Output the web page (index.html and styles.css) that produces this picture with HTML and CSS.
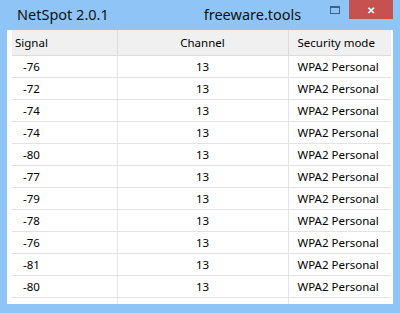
FILE: index.html
```html
<!DOCTYPE html>
<html lang="en">
<head>
  <meta charset="UTF-8" />
  <title>NetSpot 2.0.1</title>
  <link rel="stylesheet" href="styles.css">
</head>
<body>

  <div class="window">

    <div class="titlebar">
      <span class="app-name">NetSpot 2.0.1</span>
      <span class="site-name">freeware.tools</span>
      <div class="controls">
        <span class="btn-max"><span class="max-box"></span></span>
        <span class="btn-close">&#x2715;</span>
      </div>
    </div>

    <div class="client">
      <table class="grid">
        <thead>
          <tr>
            <th class="col-signal">Signal</th>
            <th class="col-channel">Channel</th>
            <th class="col-security">Security mode</th>
          </tr>
        </thead>
        <tbody>
          <tr><td class="col-signal">-76</td><td class="col-channel">13</td><td class="col-security">WPA2 Personal</td></tr>
          <tr><td class="col-signal">-72</td><td class="col-channel">13</td><td class="col-security">WPA2 Personal</td></tr>
          <tr><td class="col-signal">-74</td><td class="col-channel">13</td><td class="col-security">WPA2 Personal</td></tr>
          <tr><td class="col-signal">-74</td><td class="col-channel">13</td><td class="col-security">WPA2 Personal</td></tr>
          <tr><td class="col-signal">-80</td><td class="col-channel">13</td><td class="col-security">WPA2 Personal</td></tr>
          <tr><td class="col-signal">-77</td><td class="col-channel">13</td><td class="col-security">WPA2 Personal</td></tr>
          <tr><td class="col-signal">-79</td><td class="col-channel">13</td><td class="col-security">WPA2 Personal</td></tr>
          <tr><td class="col-signal">-78</td><td class="col-channel">13</td><td class="col-security">WPA2 Personal</td></tr>
          <tr><td class="col-signal">-76</td><td class="col-channel">13</td><td class="col-security">WPA2 Personal</td></tr>
          <tr><td class="col-signal">-81</td><td class="col-channel">13</td><td class="col-security">WPA2 Personal</td></tr>
          <tr><td class="col-signal">-80</td><td class="col-channel">13</td><td class="col-security">WPA2 Personal</td></tr>
          <tr><td class="col-signal"></td><td class="col-channel"></td><td class="col-security"></td></tr>
        </tbody>
      </table>
    </div>

  </div>

</body>
</html>
```

FILE: styles.css
```css
* {
  box-sizing: border-box;
}

body {
  margin: 0;
  font-family: "Noto Sans", "Open Sans", sans-serif;
  background: #8ec5f6;
  color: #000;
}

.window {
  width: 400px;
  height: 313px;
  display: flex;
  flex-direction: column;
  background: #8ec5f6;
}

.titlebar {
  height: 30px;
  display: flex;
  align-items: flex-start;
}

.app-name {
  font-size: 14.5px;
  margin: 4px 0 0 17px;
  color: #111;
}

.site-name {
  font-size: 14.5px;
  margin: 4px 0 0 95px;
  color: #111;
}

.controls {
  margin-left: auto;
  margin-right: 7px;
  display: flex;
}

.btn-max {
  width: 26px;
  height: 19px;
  display: flex;
  align-items: center;
  justify-content: center;
  margin-right: 3px;
  padding-left: 3px;
}

.max-box {
  width: 10px;
  height: 8px;
  border: 1px solid #3f6184;
  border-top-width: 2px;
}

.btn-close {
  width: 44px;
  height: 19px;
  background: #c75050;
  color: #fff;
  font-size: 10px;
  font-weight: bold;
  display: flex;
  align-items: center;
  justify-content: center;
}

.client {
  height: 274px;
  margin: 0 7px;
  padding: 0 2px 0 5px;
  background: #fff;
  overflow: hidden;
}

.grid {
  width: 379px;
  border-collapse: collapse;
  table-layout: fixed;
  font-size: 11.5px;
}

.grid th {
  height: 25px;
  padding: 0;
  font-weight: normal;
  background: #f0f0f0;
  border-right: 1px solid #dadada;
  border-bottom: 1px solid #dcdcdc;
}

.grid td {
  height: 22px;
  padding: 0;
  border-right: 1px solid #e3e3e3;
  border-bottom: 1px solid #e3e3e3;
}

.grid tr > :last-child {
  border-right: none;
}

.col-signal {
  width: 105px;
  text-align: left;
}

th.col-signal {
  padding-left: 3px;
}

td.col-signal {
  padding-left: 11px;
}

.col-channel {
  width: 171px;
  text-align: center;
}

.col-security {
  text-align: left;
  padding-left: 9px !important;
}
```
